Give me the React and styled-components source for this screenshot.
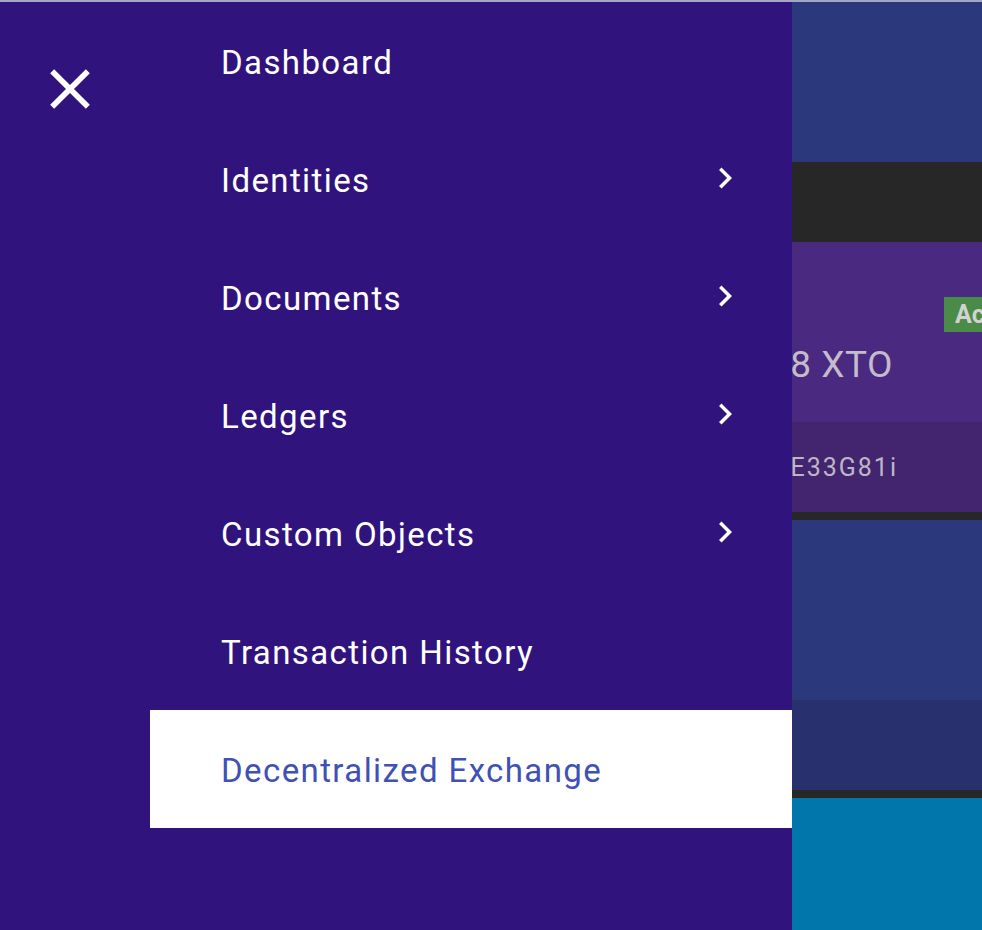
import React from "react";
import styled, { createGlobalStyle } from "styled-components";

const GlobalStyle = createGlobalStyle`
  html, body {
    margin: 0;
    padding: 0;
    background: #272727;
    font-family: Roboto, "Noto Sans", "Liberation Sans", sans-serif;
  }
`;

const Screen = styled.div`
  position: relative;
  width: 982px;
  height: 930px;
  overflow: hidden;
  background: #272727;
`;

const TopLine = styled.div`
  height: 2px;
  background: #a3a6c4;
`;

const Page = styled.div`
  display: flex;
  flex-direction: column;
`;

const Header = styled.div`
  height: 160px;
  background: #2c387c;
`;

const CardList = styled.div`
  display: flex;
  flex-direction: column;
  gap: 8px;
  padding-top: 80px;
`;

const CardTop = styled.div`
  position: relative;
  box-sizing: border-box;
  height: 180px;
  background: ${(p) => p.$bg};
  display: flex;
  align-items: center;
  justify-content: flex-end;
  padding: 64px 89px 0 0;
  color: #c2bccb;
  font-size: 37px;
  letter-spacing: 0.5px;
  white-space: nowrap;
`;

const CardBottom = styled.div`
  height: 90px;
  background: ${(p) => p.$bg};
  display: flex;
  align-items: center;
  justify-content: flex-end;
  padding-right: 84px;
  color: #bdb6c6;
  font-size: 25px;
  letter-spacing: 2px;
  white-space: nowrap;
`;

const Badge = styled.span`
  position: absolute;
  top: 55px;
  left: 944px;
  height: 35px;
  padding: 0 10px 0 11px;
  display: flex;
  align-items: center;
  background: #4a8b48;
  color: #d2d2d2;
  font-weight: 700;
  font-size: 25px;
  letter-spacing: 0;
`;

const Footer = styled.div`
  height: 140px;
  background: #0076ab;
`;

const Drawer = styled.aside`
  position: absolute;
  top: 2px;
  left: 0;
  bottom: 0;
  width: 792px;
  background: #30137d;
  display: flex;
`;

const Side = styled.div`
  width: 150px;
  flex-shrink: 0;
`;

const CloseButton = styled.button`
  display: block;
  margin: 53px 0 0 36px;
  padding: 0;
  border: 0;
  background: transparent;
  color: #fff;
  cursor: pointer;
  svg {
    display: block;
  }
`;

const Nav = styled.nav`
  flex: 1;
  display: flex;
  flex-direction: column;
`;

const NavItem = styled.a`
  height: 118px;
  display: flex;
  align-items: center;
  justify-content: space-between;
  padding: 0 46px 0 71px;
  font-size: 33px;
  letter-spacing: 1.4px;
  color: ${(p) => (p.$active ? "#3f51b5" : "#ffffff")};
  background: ${(p) => (p.$active ? "#ffffff" : "transparent")};
  text-decoration: none;
  span {
    margin-top: 2px;
  }
  svg {
    display: block;
    margin-top: -3px;
  }
`;

const items = [
  { label: "Dashboard" },
  { label: "Identities", sub: true },
  { label: "Documents", sub: true },
  { label: "Ledgers", sub: true },
  { label: "Custom Objects", sub: true },
  { label: "Transaction History" },
  { label: "Decentralized Exchange", active: true },
];

const Chevron = () => (
  <svg width="42" height="42" viewBox="0 0 24 24" fill="currentColor">
    <path d="M10 6L8.59 7.41 13.17 12l-4.58 4.59L10 18l6-6z" />
  </svg>
);

const CloseIcon = () => (
  <svg width="68" height="68" viewBox="0 0 24 24" fill="currentColor">
    <path d="M19 6.41L17.59 5 12 10.59 6.41 5 5 6.41 10.59 12 5 17.59 6.41 19 12 13.41 17.59 19 19 17.59 13.41 12z" />
  </svg>
);

export default function App() {
  return (
    <Screen>
      <GlobalStyle />
      <TopLine />
      <Page>
        <Header />
        <CardList>
          <div>
            <CardTop $bg="#4a2980">
              1.00000008 XTO
              <Badge>Active</Badge>
            </CardTop>
            <CardBottom $bg="#42256e">1Fh7Kq9wZxTrE33G81i</CardBottom>
          </div>
          <div>
            <CardTop $bg="#2c387c" />
            <CardBottom $bg="#28306d" />
          </div>
          <Footer />
        </CardList>
      </Page>
      <Drawer>
        <Side>
          <CloseButton aria-label="Close">
            <CloseIcon />
          </CloseButton>
        </Side>
        <Nav>
          {items.map((item) => (
            <NavItem key={item.label} $active={item.active}>
              <span>{item.label}</span>
              {item.sub && <Chevron />}
            </NavItem>
          ))}
        </Nav>
      </Drawer>
    </Screen>
  );
}
